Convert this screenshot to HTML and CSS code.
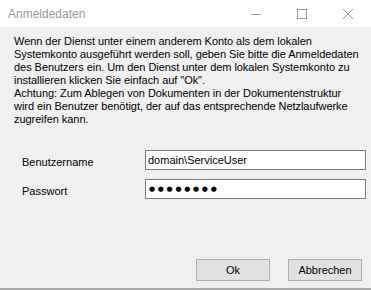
FILE: index.html
```html
<!DOCTYPE html>
<html lang="de">
<head>
  <meta charset="UTF-8">
  <meta name="viewport" content="width=device-width, initial-scale=1">
  <title>Anmeldedaten</title>
  <link rel="stylesheet" href="styles.css">
</head>
<body>
  <div class="window">
    <!-- Title bar -->
    <header class="titlebar">
      <span class="title">Anmeldedaten</span>
      <div class="caption">
        <span class="cap-btn">
          <svg width="10" height="10" viewBox="0 0 10 10"><path d="M0 5.5h10" stroke="#999" stroke-width="1"/></svg>
        </span>
        <span class="cap-btn">
          <svg width="10" height="10" viewBox="0 0 10 10"><rect x="0.5" y="0.5" width="9" height="9" fill="none" stroke="#999" stroke-width="1"/></svg>
        </span>
        <span class="cap-btn">
          <svg width="10" height="10" viewBox="0 0 10 10"><path d="M0 0L10 10M10 0L0 10" stroke="#999" stroke-width="1"/></svg>
        </span>
      </div>
    </header>

    <!-- Dialog content -->
    <div class="content">
      <p class="info">Wenn der Dienst unter einem anderem Konto als dem lokalen<br>Systemkonto ausgeführt werden soll, geben Sie bitte die Anmeldedaten<br>des Benutzers ein. Um den Dienst unter dem lokalen Systemkonto zu<br>installieren klicken Sie einfach auf "Ok".<br>Achtung: Zum Ablegen von Dokumenten in der Dokumentenstruktur<br>wird ein Benutzer benötigt, der auf das entsprechende Netzlaufwerke<br>zugreifen kann.</p>

      <div class="form">
        <div class="form-row">
          <label for="user">Benutzername</label>
          <input type="text" id="user" class="field" value="domain\ServiceUser">
        </div>
        <div class="form-row">
          <label for="pass">Passwort</label>
          <div id="pass" class="field dots">●●●●●●●●</div>
        </div>
      </div>
    </div>

    <!-- Buttons -->
    <div class="actions">
      <button type="submit">Ok</button>
      <button type="button">Abbrechen</button>
    </div>
  </div>
</body>
</html>
```

FILE: styles.css
```css
body {
  margin: 0;
  padding: 0;
  background: #f0f0f0;
  font-family: "Liberation Sans", Arial, sans-serif;
  font-size: 11px;
  color: #000;
}
.window {
  width: 371px;
  height: 288px;
  display: flex;
  flex-direction: column;
  border-bottom: 2px solid #a9a9a9;
  overflow: hidden;
}
.titlebar {
  height: 27px;
  flex: none;
  background: #fff;
  display: flex;
  align-items: center;
  justify-content: space-between;
}
.title {
  padding-left: 8px;
  font-size: 12px;
  color: #999;
}
.caption {
  display: flex;
  height: 100%;
}
.cap-btn {
  width: 46px;
  display: flex;
  align-items: center;
  justify-content: center;
}
.content {
  flex: 1;
  padding: 8px 0 0 14px;
}
.info {
  margin: 0;
  line-height: 13px;
  white-space: nowrap;
  letter-spacing: -0.05px;
}
.form {
  margin-top: 24px;
  padding-left: 8px;
  display: flex;
  flex-direction: column;
  gap: 9px;
}
.form-row {
  display: flex;
  align-items: center;
}
.form-row label {
  width: 123px;
  padding-top: 4px;
}
.field {
  box-sizing: border-box;
  width: 221px;
  height: 20px;
  margin: 0;
  padding: 0 0 0 2px;
  border: 1px solid #7a7a7a;
  background: #fff;
  font-family: "Liberation Sans", Arial, sans-serif;
  font-size: 11px;
  color: #000;
  outline: none;
}
.dots {
  display: flex;
  align-items: center;
  padding-left: 3px;
  font-family: "DejaVu Sans", sans-serif;
  font-size: 7px;
  letter-spacing: 2.7px;
}
.actions {
  flex: none;
  display: flex;
  justify-content: flex-end;
  gap: 18px;
  padding: 0 9px 7px 0;
}
button {
  width: 74px;
  height: 22px;
  background: #e1e1e1;
  border: 1px solid #adadad;
  font-family: "Liberation Sans", Arial, sans-serif;
  font-size: 11px;
  color: #000;
  padding: 0;
}
```
